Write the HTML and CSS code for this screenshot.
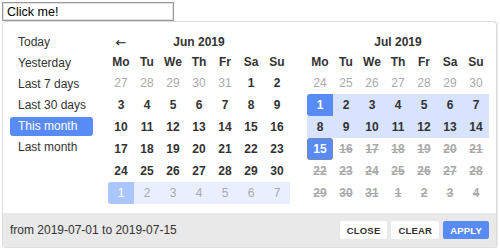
FILE: index.html
```html
<!DOCTYPE html>
<html lang="en">
<head>
  <meta charset="UTF-8" />
  <title>Date Range Picker</title>
  <link rel="stylesheet" href="styles.css">
</head>
<body>
  <input class="trigger" type="text" value="Click me!">

  <div class="picker">
    <div class="picker-body">
      <ul class="ranges">
        <li class="range-item">Today</li>
        <li class="range-item">Yesterday</li>
        <li class="range-item">Last 7 days</li>
        <li class="range-item">Last 30 days</li>
        <li class="range-item active">This month</li>
        <li class="range-item">Last month</li>
      </ul>

      <div class="month">
        <div class="month-head">
          <span class="nav">&larr;</span>
          <span class="title">Jun 2019</span>
          <span></span>
        </div>
        <div class="days">
          <b class="weekday">Mo</b><b class="weekday">Tu</b><b class="weekday">We</b><b class="weekday">Th</b><b class="weekday">Fr</b><b class="weekday">Sa</b><b class="weekday">Su</b>
          <span class="out">27</span><span class="out">28</span><span class="out">29</span><span class="out">30</span><span class="out">31</span><span>1</span><span>2</span>
          <span>3</span><span>4</span><span>5</span><span>6</span><span>7</span><span>8</span><span>9</span>
          <span>10</span><span>11</span><span>12</span><span>13</span><span>14</span><span>15</span><span>16</span>
          <span>17</span><span>18</span><span>19</span><span>20</span><span>21</span><span>22</span><span>23</span>
          <span>24</span><span>25</span><span>26</span><span>27</span><span>28</span><span>29</span><span>30</span>
          <span class="next start">1</span><span class="next">2</span><span class="next">3</span><span class="next">4</span><span class="next">5</span><span class="next">6</span><span class="next">7</span>
        </div>
      </div>

      <div class="month">
        <div class="month-head">
          <span></span>
          <span class="title">Jul 2019</span>
          <span></span>
        </div>
        <div class="days">
          <b class="weekday">Mo</b><b class="weekday">Tu</b><b class="weekday">We</b><b class="weekday">Th</b><b class="weekday">Fr</b><b class="weekday">Sa</b><b class="weekday">Su</b>
          <span class="out">24</span><span class="out">25</span><span class="out">26</span><span class="out">27</span><span class="out">28</span><span class="out">29</span><span class="out">30</span>
          <span class="sel start">1</span><span class="range">2</span><span class="range">3</span><span class="range">4</span><span class="range">5</span><span class="range">6</span><span class="range">7</span>
          <span class="range">8</span><span class="range">9</span><span class="range">10</span><span class="range">11</span><span class="range">12</span><span class="range">13</span><span class="range">14</span>
          <span class="sel focus">15</span><span class="off">16</span><span class="off">17</span><span class="off">18</span><span class="off">19</span><span class="off">20</span><span class="off">21</span>
          <span class="off">22</span><span class="off">23</span><span class="off">24</span><span class="off">25</span><span class="off">26</span><span class="off">27</span><span class="off">28</span>
          <span class="off">29</span><span class="off">30</span><span class="off">31</span><span class="off">1</span><span class="off">2</span><span class="off">3</span><span class="off">4</span>
        </div>
      </div>
    </div>

    <div class="picker-foot">
      <span class="summary">from 2019-07-01 to 2019-07-15</span>
      <button class="btn">Close</button>
      <button class="btn">Clear</button>
      <button class="btn primary">Apply</button>
    </div>
  </div>
</body>
</html>
```

FILE: styles.css
```css
body {
  margin: 2px;
  font-family: Arial, "Liberation Sans", sans-serif;
  font-size: 12px;
  color: #333;
}

.trigger {
  display: block;
  width: 172px;
  height: 19px;
  box-sizing: border-box;
  margin: 0;
  padding: 0 4px;
  border: 1px solid #999;
  box-shadow: inset 0 0 0 1px #e2e2e2;
  font-family: Arial, "Liberation Sans", sans-serif;
  font-size: 12.5px;
  color: #000;
}

.picker {
  width: 495px;
  box-sizing: border-box;
  border: 1px solid #ddd;
  border-radius: 4px;
  background: #fff;
  box-shadow: 1px 1px 2px rgba(0, 0, 0, 0.12);
}

.picker-body {
  display: flex;
  padding: 10px 7px 9px;
}

.ranges {
  list-style: none;
  margin: 0 15px 0 0;
  padding: 0;
  width: 83px;
}

.range-item {
  height: 21px;
  line-height: 21px;
  padding-left: 8px;
  border-radius: 3px;
}

.range-item.active {
  height: 19px;
  line-height: 19px;
  margin: 1px 0;
  background: #598bf7;
  color: #fff;
}

.month {
  width: 182px;
}

.month + .month {
  margin-left: 17px;
}

.month-head {
  display: grid;
  grid-template-columns: 26px 1fr 26px;
  height: 20px;
  align-items: center;
  font-weight: bold;
}

.month-head .title {
  text-align: center;
}

.month-head .nav {
  text-align: center;
  font-family: "DejaVu Sans", sans-serif;
  font-size: 13px;
  font-weight: normal;
  color: #222;
}

.days {
  display: grid;
  grid-template-columns: repeat(7, 26px);
}

.weekday {
  height: 20px;
  line-height: 20px;
  text-align: center;
}

.days span {
  height: 22px;
  line-height: 22px;
  box-sizing: border-box;
  text-align: center;
  font-weight: bold;
}

.days .out {
  font-weight: normal;
  color: #aaa;
}

.days .next {
  font-weight: normal;
  color: #aaa;
  background: #e9efff;
}

.days .next.start {
  background: #abc6fd;
  color: #fff;
  border-radius: 3px 0 0 3px;
}

.days .range {
  background: #d7e3ff;
}

.days .sel {
  background: #598bf7;
  color: #fff;
}

.days .sel.start {
  border-radius: 3px 0 0 3px;
}

.days .sel.focus {
  border: 1px dashed #888;
  border-radius: 3px;
  line-height: 20px;
}

.days .off {
  color: #aaa;
  text-decoration: line-through;
}

.picker-foot {
  display: flex;
  align-items: center;
  height: 34px;
  padding: 0 7px;
  background: #e9e9e9;
  border-radius: 0 0 3px 3px;
}

.summary {
  flex: 1;
}

.btn {
  height: 18px;
  margin-left: 4px;
  padding: 0 7px;
  border: none;
  border-radius: 2px;
  background: #fff;
  color: #333;
  font-family: Arial, "Liberation Sans", sans-serif;
  font-size: 9.5px;
  font-weight: bold;
  letter-spacing: 0.2px;
  text-transform: uppercase;
  cursor: pointer;
}

.btn.primary {
  background: #598bf7;
  color: #fff;
}
```
